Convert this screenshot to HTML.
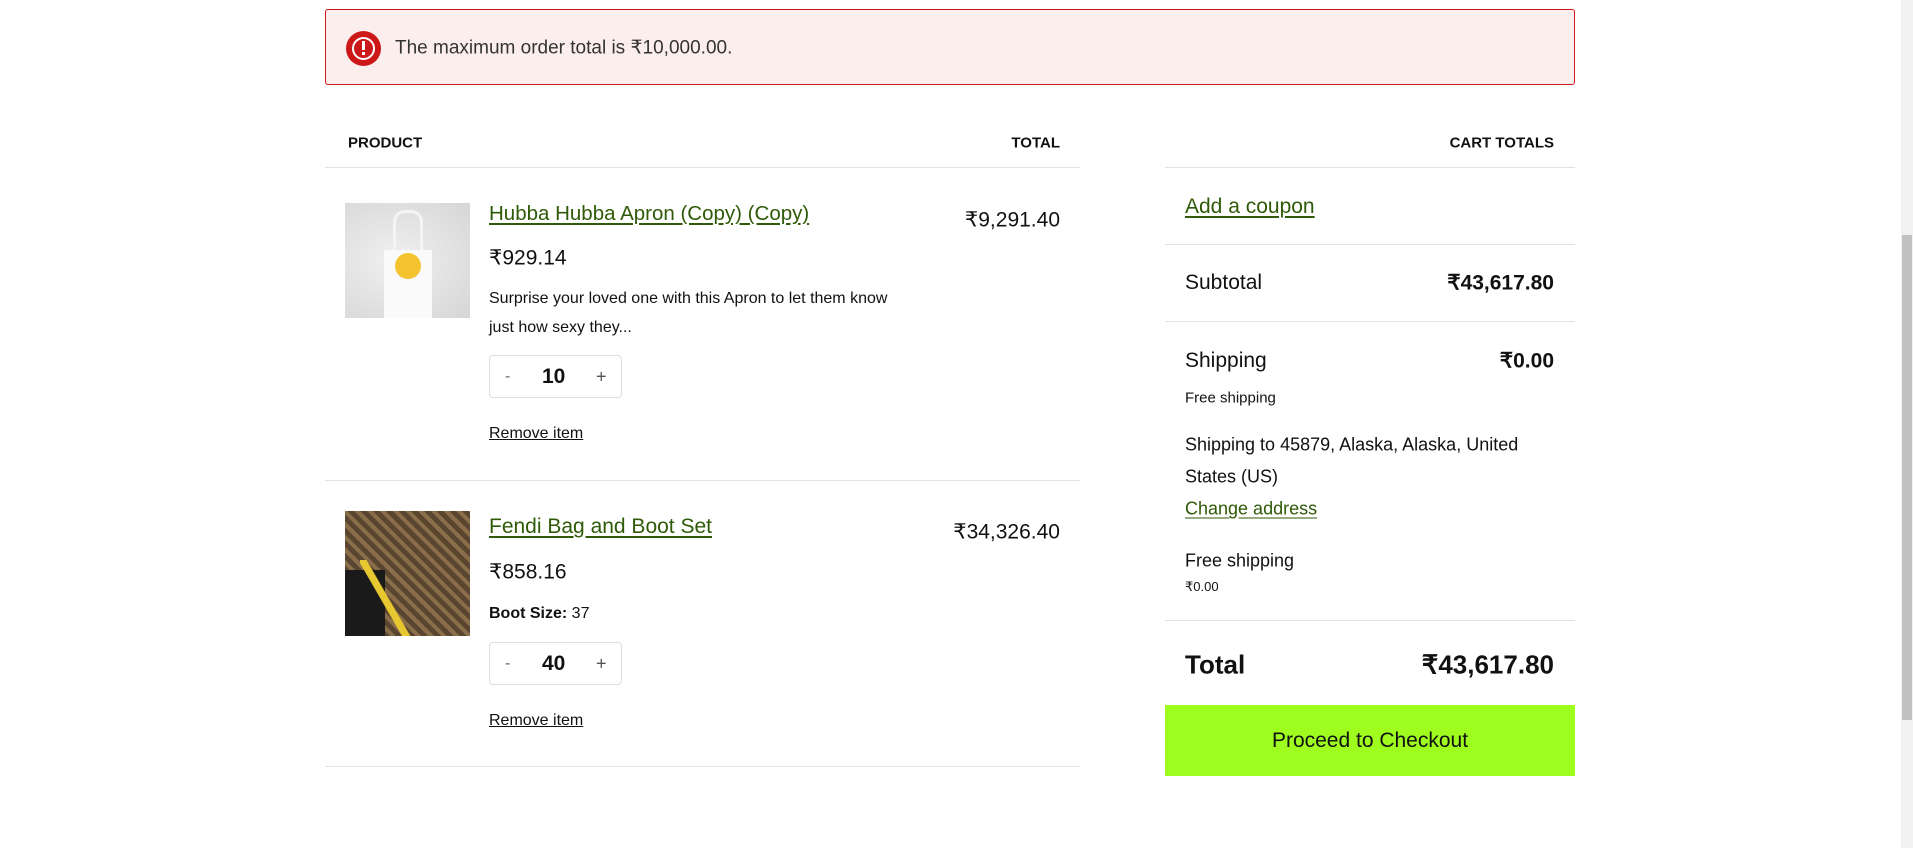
<!DOCTYPE html>
<html><head><meta charset="utf-8"><style>
*{margin:0;padding:0;box-sizing:border-box}
body{width:1913px;height:848px;background:#fff;position:relative;overflow:hidden;font-family:"Liberation Sans",sans-serif;color:#111}
.a{position:absolute;white-space:nowrap}
.c{transform:translateY(-50%)}
.lk{color:#2f5a07;text-decoration:underline;text-underline-offset:3px}
.hr{position:absolute;height:1px;background:#e2e2e2}
.qty{position:absolute;border:1px solid #ddd;border-radius:4px;width:133px;height:43px}
.qty span{position:absolute;top:50%;transform:translateY(-50%)}
</style></head><body>
<div class="a" style="left:325px;top:9px;width:1250px;height:76px;background:#fdeeee;border:1px solid #cc1818;border-radius:3px"></div>
<div class="a" style="left:346px;top:31px;width:35px;height:35px;border-radius:50%;background:#cc1818"></div>
<div class="a" style="left:352px;top:37px;width:23px;height:23px;border-radius:50%;border:2px solid #fff"></div>
<div class="a" style="left:362px;top:41px;width:3px;height:9px;background:#fff"></div>
<div class="a" style="left:362px;top:52px;width:3px;height:3px;background:#fff"></div>
<div class="a c" style="left:395px;top:48px;font-size:19px;color:#333">The maximum order total is ₹10,000.00.</div>

<div class="a c" style="left:348px;top:143px;font-size:15px;font-weight:bold">PRODUCT</div>
<div class="a c" style="right:853px;top:143px;font-size:15px;font-weight:bold">TOTAL</div>
<div class="hr" style="left:325px;top:167px;width:755px"></div>

<div class="a" style="left:345px;top:203px;width:125px;height:115px;background:radial-gradient(ellipse at 40% 50%,#f0f0f0,#d6d6d6)"></div>
<div class="a" style="left:393px;top:210px;width:30px;height:50px;border:3px solid #f4f4f4;border-bottom:none;border-radius:12px 12px 0 0"></div>
<div class="a" style="left:384px;top:250px;width:48px;height:68px;background:#fafafa"></div>
<div class="a" style="left:395px;top:253px;width:26px;height:26px;border-radius:50%;background:#f4c430"></div>
<div class="a c lk" style="left:489px;top:214px;font-size:20.5px">Hubba Hubba Apron (Copy) (Copy)</div>
<div class="a c" style="right:853px;top:220px;font-size:21px">₹9,291.40</div>
<div class="a c" style="left:489px;top:258px;font-size:21px">₹929.14</div>
<div class="a c" style="left:489px;top:299px;font-size:16px">Surprise your loved one with this Apron to let them know</div>
<div class="a c" style="left:489px;top:328px;font-size:16px">just how sexy they...</div>
<div class="qty" style="left:489px;top:355px"><span style="left:15px;color:#666">-</span><span style="left:52px;font-weight:bold;font-size:21px">10</span><span style="left:106px;color:#555;font-size:18px">+</span></div>
<div class="a c" style="left:489px;top:434px;font-size:16px;text-decoration:underline">Remove item</div>
<div class="hr" style="left:325px;top:480px;width:755px"></div>

<div class="a" style="left:345px;top:511px;width:125px;height:125px;background:repeating-linear-gradient(45deg,#5a4630 0 5px,#8a6e4a 5px 9px)"></div>
<div class="a" style="left:345px;top:570px;width:40px;height:66px;background:#1a1a1a"></div>
<div class="a" style="left:360px;top:560px;width:60px;height:76px;background:linear-gradient(60deg,transparent 40%,#e8c830 41%,#e8c830 48%,transparent 49%)"></div>
<div class="a c lk" style="left:489px;top:527px;font-size:21px">Fendi Bag and Boot Set</div>
<div class="a c" style="right:853px;top:532px;font-size:21px">₹34,326.40</div>
<div class="a c" style="left:489px;top:572px;font-size:21px">₹858.16</div>
<div class="a c" style="left:489px;top:614px;font-size:16px"><b>Boot Size:</b> 37</div>
<div class="qty" style="left:489px;top:642px"><span style="left:15px;color:#666">-</span><span style="left:52px;font-weight:bold;font-size:21px">40</span><span style="left:106px;color:#555;font-size:18px">+</span></div>
<div class="a c" style="left:489px;top:721px;font-size:16px;text-decoration:underline">Remove item</div>
<div class="hr" style="left:325px;top:766px;width:755px"></div>

<div class="a c" style="right:359px;top:143px;font-size:15px;font-weight:bold">CART TOTALS</div>
<div class="hr" style="left:1165px;top:167px;width:410px"></div>
<div class="a c lk" style="left:1185px;top:207px;font-size:21px">Add a coupon</div>
<div class="hr" style="left:1165px;top:244px;width:410px"></div>
<div class="a c" style="left:1185px;top:283px;font-size:21px">Subtotal</div>
<div class="a c" style="right:359px;top:283px;font-size:21px;font-weight:bold">₹43,617.80</div>
<div class="hr" style="left:1165px;top:321px;width:410px"></div>
<div class="a c" style="left:1185px;top:361px;font-size:21px">Shipping</div>
<div class="a c" style="right:359px;top:361px;font-size:21px;font-weight:bold">₹0.00</div>
<div class="a c" style="left:1185px;top:398px;font-size:15px">Free shipping</div>
<div class="a c" style="left:1185px;top:445px;font-size:18px">Shipping to 45879, Alaska, Alaska, United</div>
<div class="a c" style="left:1185px;top:477px;font-size:18px">States (US)</div>
<div class="a c lk" style="left:1185px;top:509px;font-size:18px">Change address</div>
<div class="a c" style="left:1185px;top:561px;font-size:18px">Free shipping</div>
<div class="a c" style="left:1185px;top:587px;font-size:13px">₹0.00</div>
<div class="hr" style="left:1165px;top:620px;width:410px"></div>
<div class="a c" style="left:1185px;top:665px;font-size:26px;font-weight:bold">Total</div>
<div class="a c" style="right:359px;top:665px;font-size:26px;font-weight:bold">₹43,617.80</div>
<div class="a" style="left:1165px;top:705px;width:410px;height:71px;background:#9efd1f;display:flex;align-items:center;justify-content:center;font-size:21px">Proceed to Checkout</div>

<div class="a" style="left:1901px;top:0;width:12px;height:848px;background:#f1f1f1"></div>
<div class="a" style="left:1902px;top:235px;width:10px;height:485px;background:#c1c1c1"></div>
</body></html>
